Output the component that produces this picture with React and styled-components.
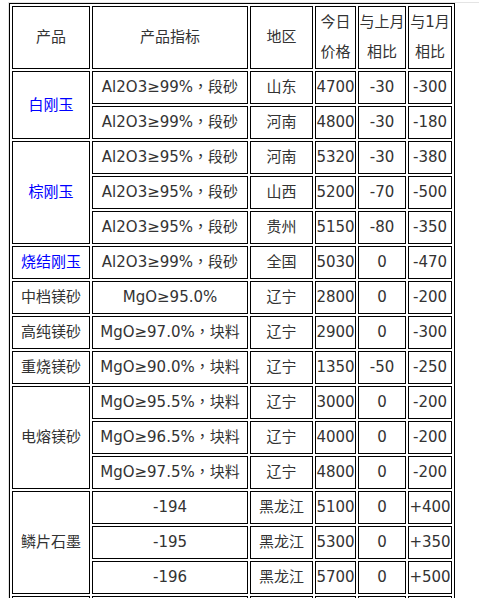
import React from "react";
import styled, { createGlobalStyle } from "styled-components";

const GlobalStyle = createGlobalStyle`
  html, body { background: #ffffff; }
  body {
    margin: 2px 0 0 8px;
    font-family: "DejaVu Sans", "Noto Sans CJK SC", sans-serif;
    color: #333333;
  }
`;

const Frame = styled.div`
  border-top: 1px solid #e4e4e4;
  border-left: 1px solid #e4e4e4;
  min-height: 700px;
`;

const Table = styled.table`
  border: 1px solid #000000;
  border-collapse: separate;
  border-spacing: 2px;
  table-layout: fixed;
  width: 446px;
  font-size: 15px;
  line-height: 30px;
`;

const HeadCell = styled.th`
  box-sizing: border-box;
  width: ${(p) => p.$w}px;
  border: 1px solid #000000;
  padding: 0 0 1px;
  font-weight: normal;
  text-align: center;
  vertical-align: middle;
  color: #333333;
`;

const Cell = styled.td`
  border: 1px solid #000000;
  padding: 0 0 1px;
  text-align: center;
  vertical-align: middle;
  white-space: nowrap;
  color: ${(p) => (p.$link ? "#0000ff" : "#333333")};
`;

const Punct = styled.span`
  font-family: "Noto Sans CJK TC", "Noto Sans CJK SC", sans-serif;
  line-height: 0;
`;

const columns = [
  { w: 78, label: ["产品"] },
  { w: 156, label: ["产品指标"] },
  { w: 63, label: ["地区"] },
  { w: 41, label: ["今日", "价格"] },
  { w: 48, label: ["与上月", "相比"] },
  { w: 44, label: ["与1月", "相比"] },
];

const groups = [
  {
    name: "白刚玉",
    link: true,
    rows: [
      ["Al2O3≥99%，段砂", "山东", "4700", "-30", "-300"],
      ["Al2O3≥99%，段砂", "河南", "4800", "-30", "-180"],
    ],
  },
  {
    name: "棕刚玉",
    link: true,
    rows: [
      ["Al2O3≥95%，段砂", "河南", "5320", "-30", "-380"],
      ["Al2O3≥95%，段砂", "山西", "5200", "-70", "-500"],
      ["Al2O3≥95%，段砂", "贵州", "5150", "-80", "-350"],
    ],
  },
  {
    name: "烧结刚玉",
    link: true,
    rows: [["Al2O3≥99%，段砂", "全国", "5030", "0", "-470"]],
  },
  {
    name: "中档镁砂",
    rows: [["MgO≥95.0%", "辽宁", "2800", "0", "-200"]],
  },
  {
    name: "高纯镁砂",
    rows: [["MgO≥97.0%，块料", "辽宁", "2900", "0", "-300"]],
  },
  {
    name: "重烧镁砂",
    rows: [["MgO≥90.0%，块料", "辽宁", "1350", "-50", "-250"]],
  },
  {
    name: "电熔镁砂",
    rows: [
      ["MgO≥95.5%，块料", "辽宁", "3000", "0", "-200"],
      ["MgO≥96.5%，块料", "辽宁", "4000", "0", "-200"],
      ["MgO≥97.5%，块料", "辽宁", "4800", "0", "-200"],
    ],
  },
  {
    name: "鳞片石墨",
    rows: [
      ["-194", "黑龙江", "5100", "0", "+400"],
      ["-195", "黑龙江", "5300", "0", "+350"],
      ["-196", "黑龙江", "5700", "0", "+500"],
    ],
  },
  {
    name: "\u00a0",
    rows: [["\u00a0", "\u00a0", "\u00a0", "\u00a0", "\u00a0"]],
  },
];

function Spec({ text }) {
  const parts = text.split("，");
  return parts.map((p, i) => (
    <React.Fragment key={i}>
      {i > 0 && <Punct>，</Punct>}
      {p}
    </React.Fragment>
  ));
}

export default function App() {
  return (
    <>
      <GlobalStyle />
      <Frame>
        <Table>
          <thead>
            <tr>
              {columns.map((c, i) => (
                <HeadCell key={i} $w={c.w}>
                  {c.label.map((l, j) => (
                    <React.Fragment key={j}>
                      {j > 0 && <br />}
                      {l}
                    </React.Fragment>
                  ))}
                </HeadCell>
              ))}
            </tr>
          </thead>
          <tbody>
            {groups.map((g, gi) =>
              g.rows.map((r, ri) => (
                <tr key={`${gi}-${ri}`}>
                  {ri === 0 && (
                    <Cell rowSpan={g.rows.length} $link={g.link}>
                      {g.name}
                    </Cell>
                  )}
                  {r.map((v, vi) => (
                    <Cell key={vi}>
                      <Spec text={v} />
                    </Cell>
                  ))}
                </tr>
              ))
            )}
          </tbody>
        </Table>
      </Frame>
    </>
  );
}
